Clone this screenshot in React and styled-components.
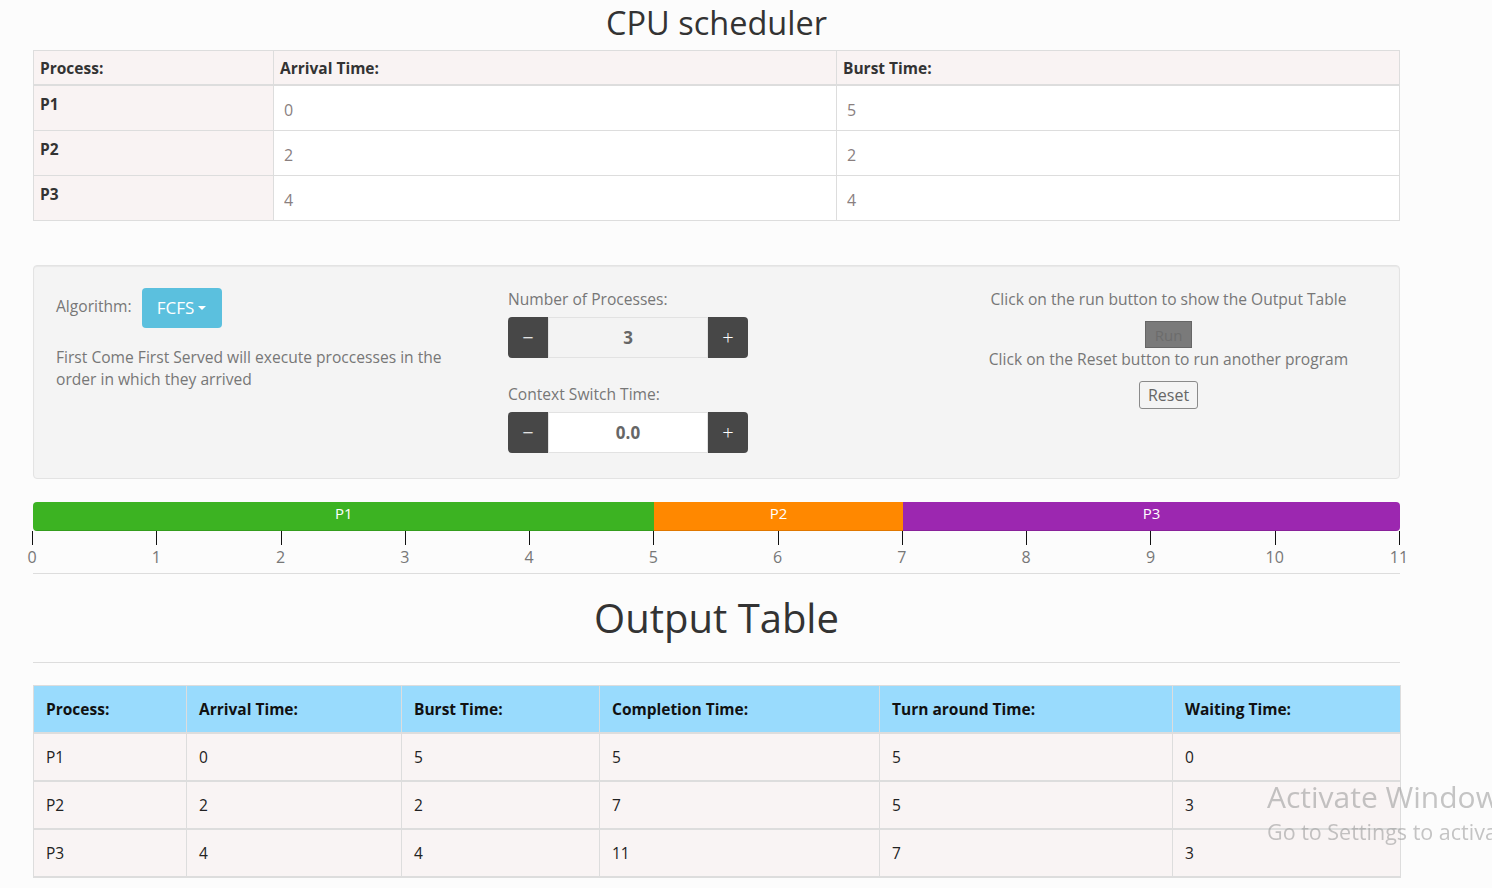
import React from 'react';
import styled, { createGlobalStyle } from 'styled-components';

const GlobalStyle = createGlobalStyle`
  body {
    margin: 0;
    background-color: #fcfcfc;
    font-family: "Open Sans", "Noto Sans", sans-serif;
    color: #333;
    overflow: hidden;
  }
`;

const inputRows = [
  { name: 'P1', arrival: 0, burst: 5 },
  { name: 'P2', arrival: 2, burst: 2 },
  { name: 'P3', arrival: 4, burst: 4 },
];

const gantt = [
  { name: 'P1', start: 0, end: 5, color: '#3cb322' },
  { name: 'P2', start: 5, end: 7, color: '#ff8800' },
  { name: 'P3', start: 7, end: 11, color: '#9c27b0' },
];

const outputHeaders = [
  { label: 'Process:', width: 153 },
  { label: 'Arrival Time:', width: 215 },
  { label: 'Burst Time:', width: 198 },
  { label: 'Completion Time:', width: 280 },
  { label: 'Turn around Time:', width: 293 },
  { label: 'Waiting Time:', width: 228 },
];

const outputRows = [
  ['P1', 0, 5, 5, 5, 0],
  ['P2', 2, 2, 7, 5, 3],
  ['P3', 4, 4, 11, 7, 3],
];

const totalTime = 11;

const App = () => {
  return (
    <>
      <GlobalStyle />
      <Page>
        <Title>CPU scheduler</Title>

        <InputTable>
          <colgroup>
            <col style={{ width: 240 }} />
            <col style={{ width: 563 }} />
            <col />
          </colgroup>
          <thead>
            <tr>
              <HeadCell>Process:</HeadCell>
              <HeadCell>Arrival Time:</HeadCell>
              <HeadCell>Burst Time:</HeadCell>
            </tr>
          </thead>
          <tbody>
            {inputRows.map((row) => (
              <tr key={row.name}>
                <NameCell>{row.name}</NameCell>
                <ValueCell>
                  <ValueInput defaultValue={row.arrival} />
                </ValueCell>
                <ValueCell>
                  <ValueInput defaultValue={row.burst} />
                </ValueCell>
              </tr>
            ))}
          </tbody>
        </InputTable>

        <Well>
          <Column>
            <AlgoRow>
              <MutedText>Algorithm:</MutedText>
              <DropButton>
                FCFS <Caret />
              </DropButton>
            </AlgoRow>
            <Description>
              First Come First Served will execute proccesses in the order in which they arrived
            </Description>
          </Column>

          <Column $shift={1}>
            <MutedText>Number of Processes:</MutedText>
            <Spinner>
              <SpinButton $side="left">−</SpinButton>
              <SpinValue $readonly>3</SpinValue>
              <SpinButton $side="right">+</SpinButton>
            </Spinner>
            <MutedText $gap={25}>Context Switch Time:</MutedText>
            <Spinner>
              <SpinButton $side="left">−</SpinButton>
              <SpinValue>0.0</SpinValue>
              <SpinButton $side="right">+</SpinButton>
            </Spinner>
          </Column>

          <CenterColumn $shift={1}>
            <MutedText>Click on the run button to show the Output Table</MutedText>
            <RunButton disabled>Run</RunButton>
            <MutedText>Click on the Reset button to run another program</MutedText>
            <ResetButton>Reset</ResetButton>
          </CenterColumn>
        </Well>

        <GanttBar>
          {gantt.map((seg) => (
            <Segment key={seg.name} $color={seg.color} style={{ flexGrow: seg.end - seg.start }}>
              {seg.name}
            </Segment>
          ))}
        </GanttBar>
        <Axis>
          {Array.from({ length: totalTime + 1 }, (_, i) => (
            <Tick key={i} style={{ left: `${(i / totalTime) * 100}%` }}>
              <TickLabel>{i}</TickLabel>
            </Tick>
          ))}
        </Axis>
        <Rule />

        <SubTitle>Output Table</SubTitle>
        <Rule $top={21} />

        <OutputTable>
          <colgroup>
            {outputHeaders.map((h) => (
              <col key={h.label} style={{ width: h.width }} />
            ))}
          </colgroup>
          <thead>
            <tr>
              {outputHeaders.map((h) => (
                <OutHead key={h.label}>{h.label}</OutHead>
              ))}
            </tr>
          </thead>
          <tbody>
            {outputRows.map((row) => (
              <tr key={row[0]}>
                {row.map((cell, i) => (
                  <OutCell key={i}>{cell}</OutCell>
                ))}
              </tr>
            ))}
          </tbody>
        </OutputTable>
      </Page>

      <Watermark>
        <WatermarkTitle>Activate Windows</WatermarkTitle>
        <WatermarkSub>Go to Settings to activate Windows.</WatermarkSub>
      </Watermark>
    </>
  );
};

const Page = styled.div`
  width: 1367px;
  margin-left: 33px;
`;

const Title = styled.h1`
  margin: 0;
  padding-top: 3px;
  height: 47px;
  font-size: 32.5px;
  line-height: 40px;
  font-weight: 400;
  text-align: center;
  color: #333;
`;

const InputTable = styled.table`
  width: 100%;
  border-collapse: collapse;
  table-layout: fixed;
  border: 1px solid #ddd;
`;

const HeadCell = styled.th`
  background-color: #f9f3f3;
  text-align: left;
  font-size: 15.5px;
  font-weight: 700;
  color: #333;
  height: 33px;
  padding: 0 6px;
  border: 1px solid #ddd;
  border-bottom: 2px solid #ddd;
`;

const NameCell = styled.td`
  background-color: #f9f3f3;
  font-size: 15.5px;
  font-weight: 700;
  color: #333;
  vertical-align: top;
  padding: 7px 6px 0;
  border: 1px solid #ddd;
  height: 37px;
`;

const ValueCell = styled.td`
  background-color: #fff;
  padding: 0;
  border: 1px solid #ddd;
`;

const ValueInput = styled.input`
  display: block;
  width: 100%;
  box-sizing: border-box;
  height: 43px;
  padding: 3px 10px 0;
  border: none;
  outline: none;
  background: transparent;
  font-family: inherit;
  font-size: 16px;
  color: #8a7f7f;
`;

const Well = styled.div`
  margin-top: 44px;
  height: 214px;
  box-sizing: border-box;
  padding: 21px 23px 0 22px;
  background-color: #f4f4f4;
  border: 1px solid #e3e3e3;
  border-radius: 4px;
  box-shadow: inset 0 1px 1px rgba(0, 0, 0, 0.05);
  display: grid;
  grid-template-columns: 452px 453px 1fr;
`;

const Column = styled.div`
  display: flex;
  flex-direction: column;
  align-items: flex-start;
  padding-top: ${(p) => p.$shift || 0}px;
`;

const CenterColumn = styled(Column)`
  align-items: center;
`;

const MutedText = styled.div`
  font-size: 15.6px;
  line-height: 22px;
  color: #777;
  margin-top: ${(p) => p.$gap || 0}px;
`;

const AlgoRow = styled.div`
  display: flex;
  align-items: center;
  gap: 10px;
  height: 41px;
  & > ${MutedText} {
    margin-top: -4px;
  }
`;

const DropButton = styled.button`
  height: 40px;
  width: 80px;
  padding: 0;
  border: none;
  border-radius: 4px;
  background-color: #5bc0de;
  color: #fff;
  font-family: inherit;
  font-size: 17px;
  display: flex;
  align-items: center;
  justify-content: center;
  gap: 4px;
`;

const Caret = styled.span`
  display: inline-block;
  width: 0;
  height: 0;
  border-top: 4px solid #fff;
  border-left: 4px solid transparent;
  border-right: 4px solid transparent;
`;

const Description = styled.p`
  margin: 18px 0 0;
  font-size: 15.6px;
  line-height: 22px;
  color: #777;
  max-width: 400px;
`;

const Spinner = styled.div`
  display: flex;
  width: 240px;
  height: 41px;
  margin-top: 7px;
`;

const SpinButton = styled.button`
  width: 40px;
  border: none;
  background-color: #474747;
  color: #fff;
  font-family: inherit;
  font-size: 20px;
  font-weight: 300;
  padding: 0;
  border-radius: ${(p) => (p.$side === 'left' ? '4px 0 0 4px' : '0 4px 4px 0')};
`;

const SpinValue = styled.div`
  flex: 1;
  display: flex;
  align-items: center;
  justify-content: center;
  background-color: ${(p) => (p.$readonly ? '#f3f3f3' : '#fff')};
  border: 1px solid #e2e2e2;
  font-size: 17px;
  font-weight: 700;
  color: #666;
`;

const RunButton = styled.button`
  margin: 11px 0 0;
  width: 47px;
  height: 27px;
  padding: 0;
  background-color: #7a7a7a;
  border: 1px solid #666;
  border-radius: 0;
  color: #6c6c6c;
  font-family: inherit;
  font-size: 15px;
`;

const ResetButton = styled.button`
  margin-top: 11px;
  width: 59px;
  height: 28px;
  padding: 0;
  background-color: #f4f4f4;
  border: 1px solid #8a8a8a;
  border-radius: 3px;
  color: #666;
  font-family: inherit;
  font-size: 16px;
`;

const GanttBar = styled.div`
  display: flex;
  margin-top: 23px;
  height: 29px;
  border-radius: 4px;
  overflow: hidden;
`;

const Segment = styled.div`
  flex-basis: 0;
  background-color: ${(p) => p.$color};
  box-shadow: inset 0 -1px 0 rgba(0, 0, 0, 0.12);
  color: #fff;
  font-size: 15px;
  line-height: 23px;
  text-align: center;
`;

const Axis = styled.div`
  position: relative;
  height: 42px;
`;

const Tick = styled.div`
  position: absolute;
  top: 0;
  width: 1px;
  height: 14px;
  margin-left: -1px;
  background-color: #111;
`;

const TickLabel = styled.span`
  position: absolute;
  top: 15px;
  left: 0;
  transform: translateX(-50%);
  font-size: 16px;
  line-height: 22px;
  color: #777;
`;

const Rule = styled.hr`
  margin: ${(p) => p.$top || 0}px 0 0;
  border: none;
  border-top: 1px solid #ddd;
`;

const SubTitle = styled.h2`
  margin: 0;
  padding-top: 21px;
  font-size: 40px;
  line-height: 46px;
  font-weight: 400;
  text-align: center;
  color: #333;
`;

const OutputTable = styled.table`
  margin-top: 22px;
  width: 100%;
  border-collapse: collapse;
  table-layout: fixed;
  border: 1px solid #ddd;
`;

const OutHead = styled.th`
  background-color: #99dbfd;
  text-align: left;
  height: 46px;
  padding: 0 12px;
  font-size: 15.5px;
  font-weight: 700;
  color: #111;
  border: 1px solid #ddd;
  border-top: none;
  border-bottom: 2px solid #ddd;
`;

const OutCell = styled.td`
  background-color: #f9f4f4;
  height: 46px;
  padding: 0 12px;
  font-size: 15.5px;
  color: #222;
  border: 1px solid #ddd;
  border-bottom: 2px solid #ddd;
`;

const Watermark = styled.div`
  position: fixed;
  left: 1267px;
  top: 777px;
  white-space: nowrap;
  pointer-events: none;
  color: rgba(150, 150, 150, 0.55);
  font-family: "Open Sans", "Noto Sans", sans-serif;
`;

const WatermarkTitle = styled.div`
  font-size: 30px;
  line-height: 40px;
`;

const WatermarkSub = styled.div`
  font-size: 21.5px;
  line-height: 30px;
`;

export default App;
